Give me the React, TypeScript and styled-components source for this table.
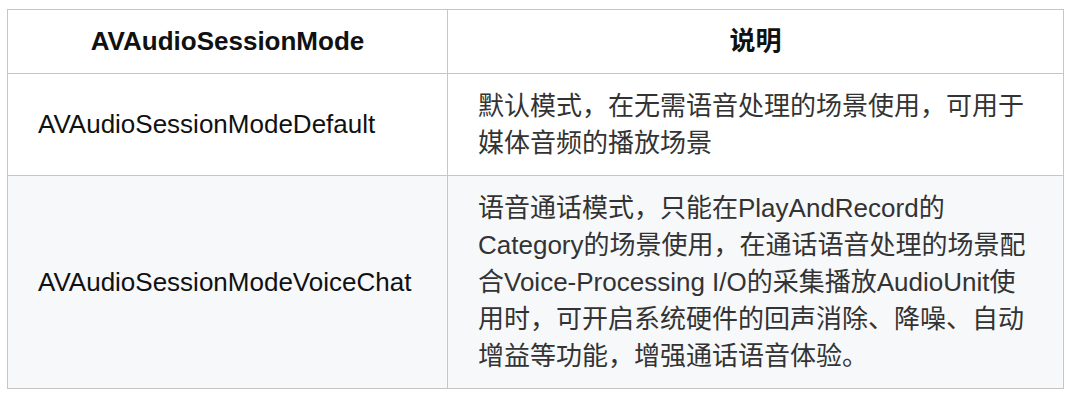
import React from "react";
import styled, { createGlobalStyle } from "styled-components";

const GlobalStyle = createGlobalStyle`
  html, body {
    margin: 0;
    padding: 0;
    background: #ffffff;
  }
  body {
    font-family: "Liberation Sans", "Noto Sans CJK SC", sans-serif;
  }
`;

const Page = styled.div`
  padding: 9px 7px;
`;

const Table = styled.table`
  border-collapse: collapse;
  table-layout: fixed;
  width: 1057px;
  font-size: 26px;
  line-height: 37px;
`;

const Row = styled.tr<{ $striped?: boolean }>`
  background: ${(p) => (p.$striped ? "#f6f8fa" : "#ffffff")};
`;

const HeadCell = styled.th`
  border: 1px solid #c6c6c6;
  padding: 13px 30px;
  font-weight: bold;
  text-align: center;
  color: #111111;
`;

const NameCell = styled.td`
  border: 1px solid #c6c6c6;
  padding: 13.5px 30px;
  vertical-align: middle;
  color: #111111;
  white-space: nowrap;
`;

const DescCell = styled.td`
  border: 1px solid #c6c6c6;
  padding: 13.5px 30px;
  vertical-align: middle;
  color: #333333;
`;

const Line = styled.span`
  display: block;
  white-space: nowrap;
`;

const modes = [
  {
    name: "AVAudioSessionModeDefault",
    lines: ["默认模式，在无需语音处理的场景使用，可用于", "媒体音频的播放场景"],
  },
  {
    name: "AVAudioSessionModeVoiceChat",
    lines: [
      "语音通话模式，只能在PlayAndRecord的",
      "Category的场景使用，在通话语音处理的场景配",
      "合Voice-Processing I/O的采集播放AudioUnit使",
      "用时，可开启系统硬件的回声消除、降噪、自动",
      "增益等功能，增强通话语音体验。",
    ],
  },
];

const App = () => {
  return (
    <Page>
      <GlobalStyle />
      <Table>
        <colgroup>
          <col style={{ width: 440 }} />
          <col />
        </colgroup>
        <thead>
          <Row>
            <HeadCell>AVAudioSessionMode</HeadCell>
            <HeadCell>说明</HeadCell>
          </Row>
        </thead>
        <tbody>
          {modes.map((m, i) => (
            <Row key={m.name} $striped={i % 2 === 1}>
              <NameCell>{m.name}</NameCell>
              <DescCell>
                {m.lines.map((l) => (
                  <Line key={l}>{l}</Line>
                ))}
              </DescCell>
            </Row>
          ))}
        </tbody>
      </Table>
    </Page>
  );
};

export default App;
